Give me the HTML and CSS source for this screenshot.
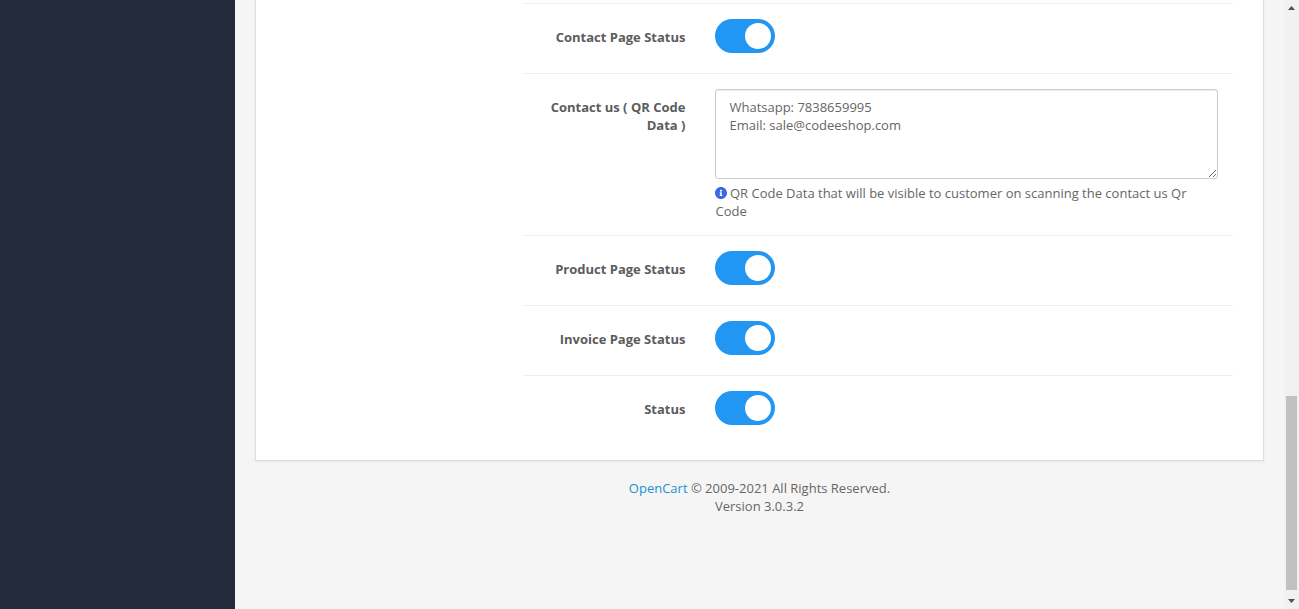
FILE: index.html
```html
<!DOCTYPE html>
<html lang="en">
<head>
<meta charset="utf-8">
<title>QR Code Settings</title>
<link rel="stylesheet" href="styles.css">
</head>
<body>
<div class="app">
  <aside class="sidebar"></aside>
  <main class="content">
    <section class="card">
      <div class="row">
        <label class="row-label">Contact Page Status</label>
        <div class="row-field"><span class="toggle"><span class="knob"></span></span></div>
      </div>
      <div class="row">
        <label class="row-label">Contact us ( QR Code Data )</label>
        <div class="row-field">
          <textarea class="qr-data" rows="5">Whatsapp: 7838659995
Email: sale@codeeshop.com</textarea>
          <p class="help"><svg class="info" viewBox="8 8 496 496" aria-hidden="true"><path d="M256 8C119.043 8 8 119.083 8 256c0 136.997 111.043 248 248 248s248-111.003 248-248C504 119.083 392.957 8 256 8zm0 110c23.196 0 42 18.804 42 42s-18.804 42-42 42-42-18.804-42-42 18.804-42 42-42zm56 254c0 6.627-5.373 12-12 12h-88c-6.627 0-12-5.373-12-12v-24c0-6.627 5.373-12 12-12h12v-64h-12c-6.627 0-12-5.373-12-12v-24c0-6.627 5.373-12 12-12h64c6.627 0 12 5.373 12 12v100h12c6.627 0 12 5.373 12 12v24z"/></svg> QR Code Data that will be visible to customer on scanning the contact us Qr Code</p>
        </div>
      </div>
      <div class="row">
        <label class="row-label">Product Page Status</label>
        <div class="row-field"><span class="toggle"><span class="knob"></span></span></div>
      </div>
      <div class="row">
        <label class="row-label">Invoice Page Status</label>
        <div class="row-field"><span class="toggle"><span class="knob"></span></span></div>
      </div>
      <div class="row">
        <label class="row-label">Status</label>
        <div class="row-field"><span class="toggle"><span class="knob"></span></span></div>
      </div>
    </section>
    <footer class="footer"><a href="#">OpenCart</a> © 2009-2021 All Rights Reserved.<br>Version 3.0.3.2</footer>
  </main>
  <div class="scrollbar" aria-hidden="true">
    <svg class="arrow arrow-up" viewBox="0 0 7 4"><path d="M3.5 0 7 4H0z"/></svg>
    <div class="track"><div class="thumb"></div></div>
    <svg class="arrow arrow-down" viewBox="0 0 7 4"><path d="M0 0h7L3.5 4z"/></svg>
  </div>
</div>
</body>
</html>
```
FILE: styles.css
```css
* { box-sizing: border-box; }
html, body { height: 100%; }
body {
  margin: 0;
  overflow: hidden;
  background: #f5f5f5;
  color: #666;
  font: 13px/18px "Open Sans", sans-serif;
}
.app { display: flex; height: 609px; }
.sidebar { flex: 0 0 235px; background: #232b3a; }
.content { flex: 1; min-width: 0; padding: 0 20px; }
.card {
  background: #fff;
  border: 1px solid #ddd;
  border-top: 0;
  box-shadow: 0 1px 2px rgba(0, 0, 0, .06);
  padding: 3px 30px 15px 267px;
}
.row {
  display: grid;
  grid-template-columns: 162.45px 1fr;
  column-gap: 30px;
  border-top: 1px solid #ededed;
  padding: 15px 15px 15px 0;
}
.row-label {
  padding: 9px 0 0 15px;
  text-align: right;
  font-weight: 700;
  color: #5c5c5c;
}
.row-field { min-width: 0; }
.toggle {
  display: block;
  width: 60px;
  height: 34px;
  margin-bottom: 5px;
  padding: 4px 4px 4px 30px;
  border-radius: 17px;
  background: #2196f3;
}
.knob {
  display: block;
  width: 26px;
  height: 26px;
  border-radius: 50%;
  background: #fff;
}
.qr-data {
  display: block;
  width: 100%;
  height: 90px;
  padding: 8px 13px;
  border: 1px solid #ccc;
  border-radius: 3px;
  box-shadow: inset 0 1px 1px rgba(0, 0, 0, .075);
  color: #666;
  font: inherit;
}
.help { margin: 5px 0 0; color: #666; }
.info { width: 12px; height: 12px; margin-right: -.86px; fill: #3b66e6; vertical-align: -1px; }
.footer { margin-top: 18px; text-align: center; }
.footer a { color: #1e91cf; text-decoration: none; }
.scrollbar {
  flex: 0 0 15px;
  display: flex;
  flex-direction: column;
  align-items: center;
  background: #f1f1f1;
}
.arrow { flex: none; width: 7px; height: 4px; fill: #505050; }
.arrow-up { margin: 6px 0 0; }
.arrow-down { margin: 0 0 6px; }
.track { flex: 1; width: 11px; padding-top: 386px; }
.thumb { width: 11px; height: 194px; background: #c1c1c1; }
```
